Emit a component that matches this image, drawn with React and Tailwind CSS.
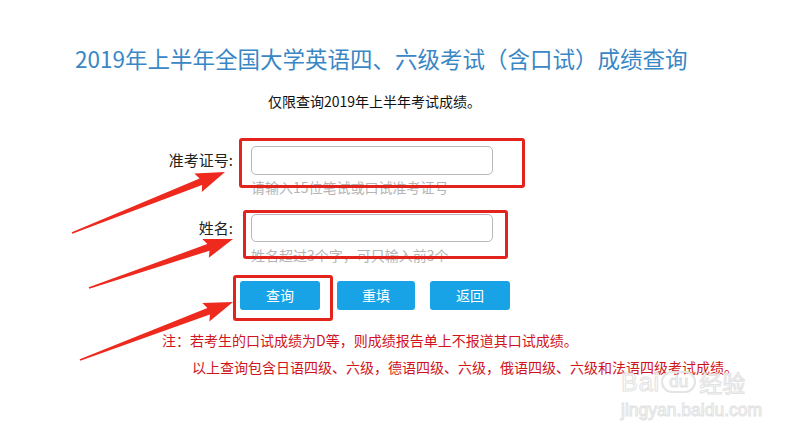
const FONT = { fontFamily: '"Microsoft YaHei", "Noto Sans CJK SC", "Noto Sans", sans-serif' }
const LATIN = { fontFamily: '"Liberation Sans", Arial, sans-serif' }

function arrowPoints([tx, ty], [hx, hy]) {
  const dx = hx - tx
  const dy = hy - ty
  const len = Math.hypot(dx, dy)
  const ux = dx / len
  const uy = dy / len
  const nx = -uy
  const ny = ux
  const headLen = 26
  const bx = hx - ux * headLen
  const by = hy - uy * headLen
  const p = (x, y) => `${x.toFixed(1)},${y.toFixed(1)}`
  return [
    p(tx + nx * 0.8, ty + ny * 0.8),
    p(bx + nx * 3.5, by + ny * 3.5),
    p(bx - ux * 3 + nx * 10, by - uy * 3 + ny * 10),
    p(hx, hy),
    p(bx - ux * 3 - nx * 10, by - uy * 3 - ny * 10),
    p(bx - nx * 3.5, by - ny * 3.5),
    p(tx - nx * 0.8, ty - ny * 0.8),
  ].join(' ')
}

const ARROWS = [
  [[72, 233], [225, 172]],
  [[89, 288], [233, 239]],
  [[80, 360], [233, 302]],
]

export default function App() {
  return (
    <div className="relative w-[811px] h-[440px] bg-white overflow-hidden" style={FONT}>
      <div className="pt-[44px] pl-[75px] text-[22.5px] leading-[28px] text-[#3a87c6] whitespace-nowrap">
        2019年上半年全国大学英语四、六级考试（含口试）成绩查询
      </div>
      <div className="mt-[19px] pl-[268px] text-[14px] leading-[20px] text-[#111]">
        仅限查询2019年上半年考试成绩。
      </div>

      <div className="mt-[35px] flex items-center">
        <label className="w-[233px] text-right text-[15px] text-[#222]">准考证号:</label>
        <div className="ml-[18px] w-[242px] h-[29px] border border-[#b8b8b8] rounded-[5px]" />
      </div>
      <div className="mt-[2px] pl-[251px] text-[14px] leading-[20px] text-[#b5b5b5]">
        请输入15位笔试或口试准考证号
      </div>

      <div className="mt-[17px] flex items-center">
        <label className="w-[233px] text-right text-[15px] text-[#222]">姓名:</label>
        <div className="ml-[18px] w-[242px] h-[28px] border border-[#b8b8b8] rounded-[5px]" />
      </div>
      <div className="mt-[3px] pl-[251px] text-[14px] leading-[20px] text-[#b5b5b5]">
        姓名超过3个字，可只输入前3个
      </div>

      <div className="mt-[16px] pl-[240px] flex text-[14px] text-white">
        <button className="w-[80px] h-[29px] rounded-[3px] bg-[#17a3e6]">查询</button>
        <button className="ml-[17px] w-[78px] h-[29px] rounded-[3px] bg-[#17a3e6]">重填</button>
        <button className="ml-[15px] w-[80px] h-[29px] rounded-[3px] bg-[#17a3e6]">返回</button>
      </div>

      <div className="mt-[20px] pl-[162px] text-[14px] leading-[20px] text-[#d0131c]">
        注：若考生的口试成绩为D等，则成绩报告单上不报道其口试成绩。
      </div>
      <div className="mt-[7px] pl-[192px] text-[14px] leading-[20px] text-[#d0131c]">
        以上查询包含日语四级、六级，德语四级、六级，俄语四级、六级和法语四级考试成绩。
      </div>

      {/* watermark */}
      <div className="absolute left-[621px] top-[369px] select-none pointer-events-none">
        <div className="flex items-center whitespace-nowrap text-white/70 [-webkit-text-stroke:1px_#e2e2e2]">
          <span className="text-[25px] leading-[26px] tracking-[1px]" style={LATIN}>Bai</span>
          <span
            className="ml-[1px] w-[35px] h-[22px] rounded-[11px] border-2 border-[#e4e4e4] flex items-center justify-center text-[17px] leading-[18px]"
            style={LATIN}
          >
            du
          </span>
          <span className="ml-[3px] text-[23px] leading-[26px]">经验</span>
        </div>
        <div className="mt-[6px] whitespace-nowrap text-[17.5px] leading-[18px] text-white/70 [-webkit-text-stroke:1px_#e2e2e2]" style={LATIN}>
          jingyan.baidu.com
        </div>
      </div>

      {/* annotation boxes */}
      <div className="absolute left-[239px] top-[138px] w-[286px] h-[50px] border-[3px] border-[#e3241d] rounded-[3px]" />
      <div className="absolute left-[243px] top-[210px] w-[265px] h-[49px] border-[3px] border-[#e3241d] rounded-[3px]" />
      <div className="absolute left-[233px] top-[275px] w-[100px] h-[46px] border-[3px] border-[#e3241d] rounded-[3px]" />

      <svg className="absolute left-0 top-0 pointer-events-none" width="811" height="440">
        {ARROWS.map(([t, h], i) => (
          <polygon key={i} points={arrowPoints(t, h)} fill="#ee2a1f" />
        ))}
      </svg>
    </div>
  )
}
